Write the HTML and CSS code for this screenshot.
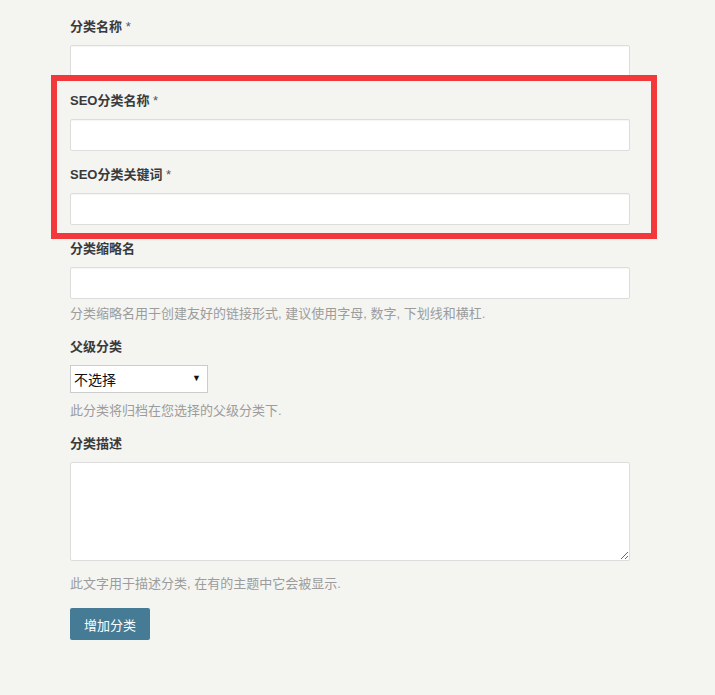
FILE: index.html
```html
<!DOCTYPE html>
<html lang="zh-CN">
<head>
<meta charset="utf-8">
<title>添加分类</title>
<link rel="stylesheet" href="styles.css">
</head>
<body>
<form class="tag-form">
  <div class="form-field">
    <label class="field-label">分类名称 <span class="req">*</span></label>
    <input class="text-input" type="text">
  </div>
  <div class="form-field">
    <label class="field-label">SEO分类名称 <span class="req">*</span></label>
    <input class="text-input" type="text">
  </div>
  <div class="form-field">
    <label class="field-label">SEO分类关键词 <span class="req">*</span></label>
    <input class="text-input" type="text">
  </div>
  <div class="form-field">
    <label class="field-label">分类缩略名</label>
    <input class="text-input" type="text">
    <p class="help">分类缩略名用于创建友好的链接形式, 建议使用字母, 数字, 下划线和横杠.</p>
  </div>
  <div class="form-field">
    <label class="field-label">父级分类</label>
    <div class="select-wrap">
      <select class="parent-select"><option>不选择</option></select>
      <span class="select-arrow">▼</span>
    </div>
    <p class="help help-select">此分类将归档在您选择的父级分类下.</p>
  </div>
  <div class="form-field">
    <label class="field-label">分类描述</label>
    <textarea class="desc-input"></textarea>
    <p class="help help-desc">此文字用于描述分类, 在有的主题中它会被显示.</p>
  </div>
  <div class="submit-row">
    <button class="btn-primary" type="button">增加分类</button>
  </div>
  <div class="highlight-box"></div>
</form>
</body>
</html>
```

FILE: styles.css
```css
* { box-sizing: border-box; }
html, body {
  margin: 0;
  padding: 0;
  background: #f4f4f1;
}
body {
  font-family: "Liberation Sans", "Noto Sans CJK SC", sans-serif;
  font-size: 13px;
  color: #333;
}
.tag-form {
  position: relative;
  padding: 18px 0 0 70px;
  width: 715px;
  height: 695px;
}
.form-field {
  display: flex;
  flex-direction: column;
  align-items: flex-start;
  margin-bottom: 15px;
}
.field-label {
  font-weight: bold;
  font-size: 13px;
  line-height: 18px;
  color: #3a3a3a;
  margin-bottom: 9px;
}
.req {
  font-weight: normal;
  color: #555;
}
.text-input {
  width: 560px;
  height: 32px;
  border: 1px solid #ddd;
  border-radius: 2px;
  background: #fff;
  box-shadow: inset 0 1px 1px rgba(0,0,0,0.04);
  font: inherit;
  padding: 0 8px;
}
.help {
  margin: 6px 0 0;
  font-size: 13px;
  line-height: 18px;
  color: #9c9c9c;
}
.help-select { margin-top: 9px; }
.help-desc { margin-top: 14px; }
.select-wrap {
  position: relative;
  width: 138px;
  height: 28px;
}
.parent-select {
  appearance: none;
  -webkit-appearance: none;
  width: 138px;
  height: 28px;
  border: 1px solid #ccc;
  border-radius: 0;
  background: #fff;
  font-family: "Noto Sans CJK SC", sans-serif;
  font-size: 14px;
  color: #111;
  padding: 0 0 0 3px;
}
.select-arrow {
  position: absolute;
  right: 7px;
  top: 8px;
  font-size: 9px;
  line-height: 10px;
  color: #111;
  pointer-events: none;
}
.desc-input {
  width: 560px;
  height: 99px;
  border: 1px solid #ddd;
  border-radius: 2px;
  background: #fff;
  display: block;
  font: inherit;
}
.btn-primary {
  width: 80px;
  height: 32px;
  border: none;
  border-radius: 2px;
  background: #457b95;
  color: #fff;
  font-family: "Noto Sans CJK SC", sans-serif;
  font-size: 13px;
  padding: 0;
}
.highlight-box {
  position: absolute;
  left: 51px;
  top: 75px;
  width: 606px;
  height: 164px;
  border: 6px solid #f2383b;
  pointer-events: none;
}
```
